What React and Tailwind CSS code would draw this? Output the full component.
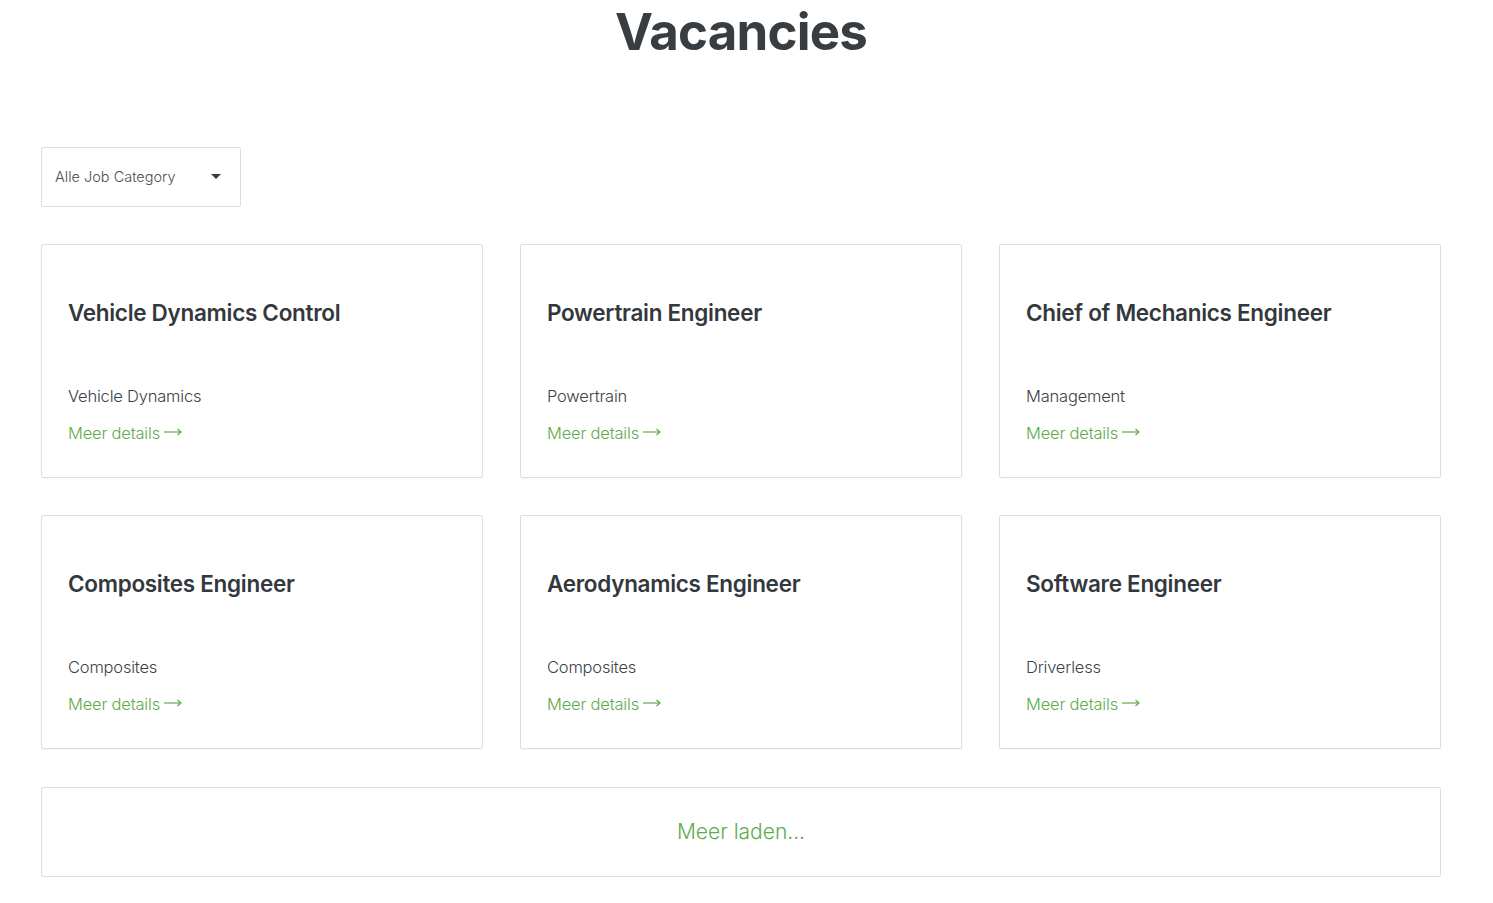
import React, { useState } from 'react';

const jobs = [
    { title: 'Vehicle Dynamics Control', category: 'Vehicle Dynamics' },
    { title: 'Powertrain Engineer', category: 'Powertrain' },
    { title: 'Chief of Mechanics Engineer', category: 'Management' },
    { title: 'Composites Engineer', category: 'Composites' },
    { title: 'Aerodynamics Engineer', category: 'Composites' },
    { title: 'Software Engineer', category: 'Driverless' },
];

const font = { fontFamily: 'Inter, "Open Sans", sans-serif' };

const LongArrow = () => (
    <svg width="18" height="8" viewBox="0 0 18 8" className="inline-block ml-[4px] mb-[2px]" fill="none" stroke="currentColor" strokeWidth="1.2">
        <path d="M0 4h17" />
        <path d="M13.5 1l3.5 3-3.5 3" />
    </svg>
);

const App = () => {
    const [category] = useState('Alle Job Category');

    return (
        <div className="min-h-screen bg-white" style={font}>
            <div className="w-[1400px] ml-[41px]">
                {/* Header */}
                <h1 className="text-center text-[51px] leading-[64px] font-bold text-[#383d42] tracking-[-0.8px]">
                    Vacancies
                </h1>

                {/* Filter */}
                <div className="mt-[83px] w-[200px] h-[60px] border border-[#dedede] rounded-[2px] flex items-center justify-between pl-[13px] pr-[19px] pb-[1px] text-[14.5px] text-[#4a4f54] font-light">
                    <span>{category}</span>
                    <span className="w-0 h-0 border-l-[5px] border-r-[5px] border-t-[5px] border-l-transparent border-r-transparent border-t-[#3a3a3a]" />
                </div>

                {/* Cards */}
                <div className="grid grid-cols-3 gap-[37px] mt-[37px]">
                    {jobs.map(job => (
                        <div
                            key={job.title}
                            className="h-[234px] border border-[#dedede] rounded-[2px] shadow-[0_1px_2px_rgba(0,0,0,0.04)] px-[26px] pt-[54px]"
                        >
                            <h2 className="text-[22.5px] leading-[28px] font-semibold text-[#33383d] tracking-[-0.3px]">{job.title}</h2>
                            <p className="mt-[57px] text-[16.5px] leading-[24px] font-light text-[#3d4247] tracking-[-0.2px]">{job.category}</p>
                            <a className="flex items-center mt-[13px] text-[16.5px] leading-[24px] font-light text-[#5eab4c] tracking-[-0.2px]">
                                Meer details<LongArrow />
                            </a>
                        </div>
                    ))}
                </div>

                {/* Load more */}
                <div className="mt-[38px] h-[90px] border border-[#dedede] rounded-[2px] flex items-center justify-center text-[21px] font-light text-[#5eab4c]">
                    Meer laden...
                </div>
            </div>
        </div>
    );
};

export default App;
